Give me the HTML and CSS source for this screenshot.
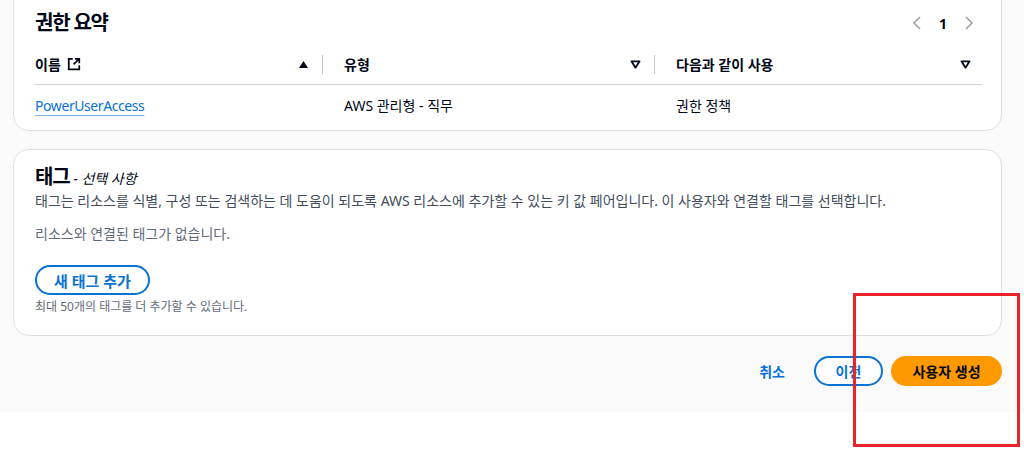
FILE: index.html
```html
<!DOCTYPE html>
<html lang="ko">
<head>
<meta charset="utf-8">
<title>사용자 생성 - 검토</title>
<link rel="stylesheet" href="styles.css">
</head>
<body>
<div class="page">
  <section class="card card-perm">
    <div class="card-head">
      <h2 class="title">권한 요약</h2>
      <div class="pager">
        <svg class="chev" viewBox="0 0 10 16" width="10" height="16"><path d="M8 2 L2 8 L8 14" fill="none" stroke="currentColor" stroke-width="1.6"/></svg>
        <span class="page-num">1</span>
        <svg class="chev" viewBox="0 0 10 16" width="10" height="16"><path d="M2 2 L8 8 L2 14" fill="none" stroke="currentColor" stroke-width="1.6"/></svg>
      </div>
    </div>
    <div class="table">
      <div class="row head">
        <div class="cell c1">
          <span class="th-label">이름
            <svg class="ext" viewBox="0 0 16 16" width="14" height="14"><path d="M6.5 2H2v12h12V9.5" fill="none" stroke="currentColor" stroke-width="2"/><path d="M9 2h5v5M14 2L7.5 8.5" fill="none" stroke="currentColor" stroke-width="2"/></svg>
          </span>
          <svg class="sort" viewBox="0 0 12 10" width="11" height="9"><path d="M6 1 L11 9 L1 9 Z" fill="currentColor"/></svg>
        </div>
        <div class="cell c2">
          <span class="th-label">유형</span>
          <svg class="sort" viewBox="0 0 12 10" width="11" height="9"><path d="M1.5 1.5 L10.5 1.5 L6 8.5 Z" fill="none" stroke="currentColor" stroke-width="2" stroke-linejoin="round"/></svg>
        </div>
        <div class="cell c3">
          <span class="th-label">다음과 같이 사용</span>
          <svg class="sort" viewBox="0 0 12 10" width="11" height="9"><path d="M1.5 1.5 L10.5 1.5 L6 8.5 Z" fill="none" stroke="currentColor" stroke-width="2" stroke-linejoin="round"/></svg>
        </div>
      </div>
      <div class="row body">
        <div class="cell c1"><a class="link" href="#">PowerUserAccess</a></div>
        <div class="cell c2">AWS 관리형 - 직무</div>
        <div class="cell c3">권한 정책</div>
      </div>
    </div>
  </section>

  <section class="card card-tags">
    <h2 class="title">태그 <span class="optional">- 선택 사항</span></h2>
    <p class="desc">태그는 리소스를 식별, 구성 또는 검색하는 데 도움이 되도록 AWS 리소스에 추가할 수 있는 키 값 페어입니다. 이 사용자와 연결할 태그를 선택합니다.</p>
    <p class="empty">리소스와 연결된 태그가 없습니다.</p>
    <button class="btn btn-normal btn-add">새 태그 추가</button>
    <p class="hint">최대 50개의 태그를 더 추가할 수 있습니다.</p>
  </section>

  <div class="actions">
    <button class="btn btn-link">취소</button>
    <button class="btn btn-normal btn-prev">이전</button>
    <button class="btn btn-primary">사용자 생성</button>
  </div>
</div>
<div class="annot"></div>
</body>
</html>
```
FILE: styles.css
```css
html, body {
  margin: 0;
  padding: 0;
  background: #ffffff;
}
body {
  font-family: "Noto Sans", "Noto Sans CJK KR", sans-serif;
  color: #000716;
  font-size: 14px;
  height: 449px;
  overflow: hidden;
  position: relative;
}
.page {
  background: #fafafa;
  height: 412px;
  padding: 0 22px 0 13px;
  box-sizing: border-box;
  display: flex;
  flex-direction: column;
}
.card {
  background: #ffffff;
  border: 1px solid #dedfe1;
  border-radius: 16px;
  padding: 0 19px 0 21px;
}
.card-perm {
  margin-top: -20px;
  padding-top: 27px;
  padding-bottom: 5px;
}
.card-head {
  display: flex;
  align-items: center;
  justify-content: space-between;
  height: 30px;
}
.title {
  margin: 0;
  font-size: 20px;
  font-weight: 700;
  line-height: 30px;
  letter-spacing: -0.06em;
}
.pager {
  display: flex;
  align-items: center;
  gap: 17px;
  margin-right: 8px;
  color: #9ba1a8;
}
.page-num {
  color: #000716;
  font-weight: 700;
  font-size: 14px;
}
.table {
  margin-top: 6px;
}
.row {
  display: grid;
  grid-template-columns: 288px 332px 1fr;
  height: 40px;
  align-items: center;
}
.row.head {
  border-bottom: 1px solid #d1d5db;
  font-weight: 700;
}
.cell {
  display: flex;
  align-items: center;
  justify-content: space-between;
  height: 100%;
  padding-left: 21px;
  padding-right: 14px;
  position: relative;
}
.cell.c1 {
  padding-left: 0;
}
.cell.c3 {
  padding-right: 11px;
}
.row.head .c1::after,
.row.head .c2::after {
  content: "";
  position: absolute;
  right: 0;
  top: 11px;
  width: 1px;
  height: 19px;
  background: #c6c6cd;
}
.th-label {
  display: inline-flex;
  align-items: center;
  gap: 6px;
}
.ext {
  color: #000716;
}
.sort {
  color: #000716;
}
.link {
  color: #0972d3;
  text-decoration: underline;
  text-decoration-color: #7fb3e6;
  text-underline-offset: 4px;
  letter-spacing: -0.03em;
}
.card-tags {
  margin-top: 18px;
  padding-top: 15px;
  padding-bottom: 20px;
}
.card-tags .title {
  line-height: 24px;
}
.optional {
  font-size: 14px;
  font-weight: 400;
  font-style: italic;
  letter-spacing: 0;
}
.desc {
  margin: 0;
  color: #414d5c;
  line-height: 20px;
}
.empty {
  margin: 13px 0 0;
  color: #5f6b7a;
  line-height: 20px;
}
.btn {
  font-family: inherit;
  font-size: 14px;
  font-weight: 700;
  border-radius: 20px;
  height: 30px;
  box-sizing: border-box;
  cursor: pointer;
  padding: 0;
  white-space: nowrap;
}
.btn-normal {
  background: #ffffff;
  border: 2px solid #0972d3;
  color: #0972d3;
}
.btn-add {
  align-self: flex-start;
  margin-top: 21px;
  width: 115px;
  font-size: 15px;
}
.hint {
  margin: 4px 0 0;
  font-size: 12px;
  color: #5f6b7a;
  line-height: 16px;
}
.actions {
  display: flex;
  justify-content: flex-end;
  align-items: center;
  gap: 8px;
  margin-top: 20px;
}
.btn-link {
  background: none;
  border: none;
  color: #0972d3;
  margin-right: 11px;
  padding: 0 10px;
}
.btn-prev {
  width: 69px;
}
.btn-primary {
  background: #ff9900;
  border: 2px solid #ff9900;
  color: #000716;
  width: 111px;
}
.annot {
  position: absolute;
  left: 853px;
  top: 293px;
  width: 167px;
  height: 154px;
  border: 3px solid #e8232b;
  box-sizing: border-box;
}
```
